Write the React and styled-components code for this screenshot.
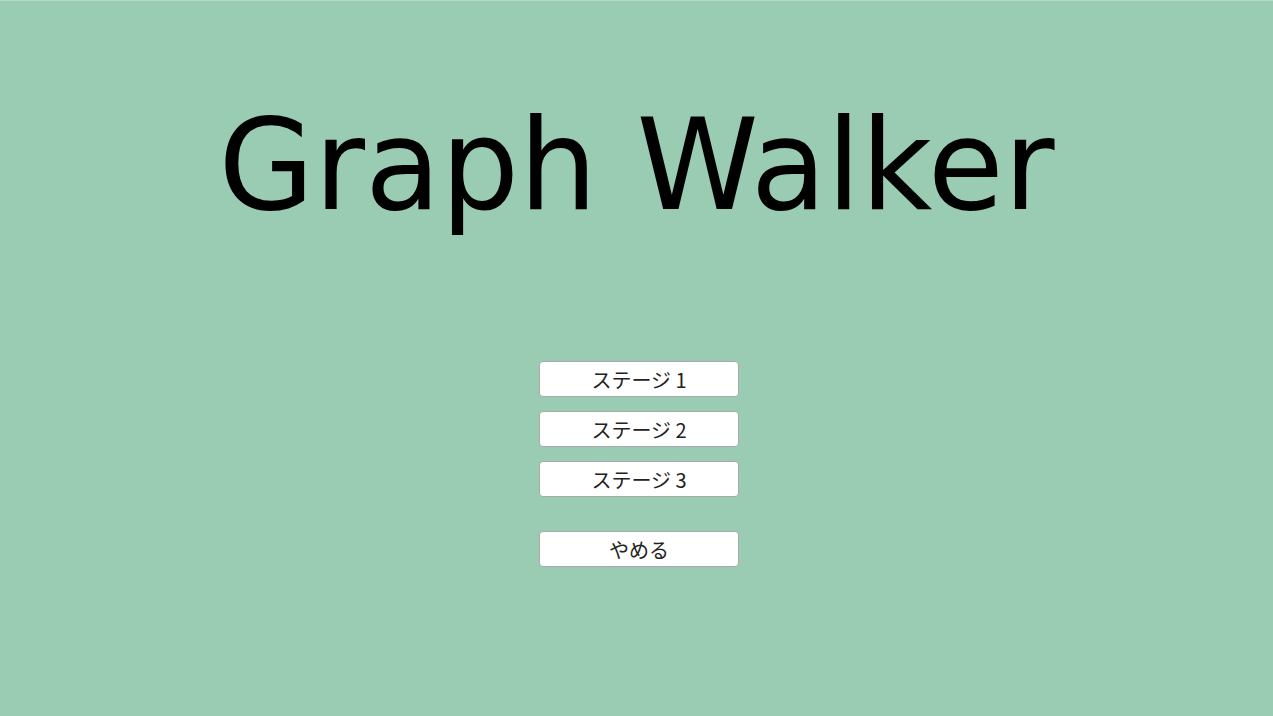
import React from "react";
import styled, { createGlobalStyle } from "styled-components";

const Global = createGlobalStyle`
  html, body { margin: 0; padding: 0; height: 100%; }
  body { background: #9acbb3; font-family: "Noto Sans CJK JP", "Noto Sans", sans-serif; }
  #root { height: 100%; }
`;

const Screen = styled.div`
  width: 100%;
  height: 716px;
  box-sizing: border-box;
  background: #9acbb3;
  border-top: 1px solid #b4d9c6;
  display: flex;
  flex-direction: column;
  align-items: center;
  overflow: hidden;
`;

const Title = styled.h1`
  margin: 102px 0 0;
  font-family: "DejaVu Sans", sans-serif;
  font-weight: 400;
  font-size: 126px;
  line-height: 1;
  color: #000;
  white-space: nowrap;
  transform: scaleX(0.98);
`;

const Menu = styled.div`
  margin-top: 132px;
  padding-left: 5px;
  display: flex;
  flex-direction: column;
  gap: 14px;
`;

const Button = styled.button`
  width: 200px;
  height: 36px;
  margin-top: ${(p) => (p.$spaced ? "20px" : "0")};
  box-sizing: border-box;
  background: #fff;
  border: 1px solid #a9a9a9;
  border-radius: 4px;
  font-family: "Noto Sans CJK JP", "Noto Sans", sans-serif;
  font-size: 20px;
  color: #222;
  display: flex;
  align-items: center;
  justify-content: center;
  padding: 0;
  cursor: pointer;
`;

export default function App() {
  return (
    <>
      <Global />
      <Screen>
        <Title>Graph Walker</Title>
        <Menu>
          <Button>ステージ 1</Button>
          <Button>ステージ 2</Button>
          <Button>ステージ 3</Button>
          <Button $spaced>やめる</Button>
        </Menu>
      </Screen>
    </>
  );
}
